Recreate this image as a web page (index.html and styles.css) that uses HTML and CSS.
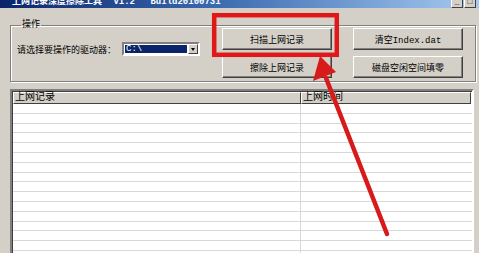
FILE: index.html
```html
<!DOCTYPE html>
<html lang="zh-CN">
<head>
    <meta charset="UTF-8">
    <title>上网记录深度擦除工具</title>
    <link rel="stylesheet" href="styles.css">
</head>
<body>
    <div class="window">
        <div class="titlebar">
            <div class="title">
                <span class="title-name">上网记录深度擦除工具</span>
                <span class="title-ver">V1.2</span>
                <span class="title-build">Build20100731</span>
            </div>
            <div class="title-buttons">
                <span class="tb-btn">_</span>
                <span class="tb-btn">□</span>
            </div>
        </div>

        <div class="content">
            <fieldset class="group">
                <legend>操作</legend>
                <div class="drive-row">
                    <label>请选择要操作的驱动器：</label>
                    <div class="combo">
                        <span class="combo-value">C:\</span>
                        <span class="combo-arrow"></span>
                    </div>
                </div>
                <div class="actions">
                    <button class="btn">扫描上网记录</button>
                    <button class="btn">清空Index.dat</button>
                    <button class="btn">擦除上网记录</button>
                    <button class="btn">磁盘空闲空间填零</button>
                </div>
            </fieldset>

            <div class="listview">
                <div class="lv-header">
                    <div class="lv-col col-url">上网记录</div>
                    <div class="lv-col col-time">上网时间</div>
                </div>
                <div class="lv-body" id="recordList"></div>
            </div>
        </div>

        <!-- 标注：红框和箭头 -->
        <svg class="annotation" width="479" height="253" viewBox="0 0 479 253">
            <rect x="214.2" y="15.2" width="122.6" height="39.6" fill="none" stroke="#e01818" stroke-width="4.5"/>
            <line x1="387" y1="234" x2="326" y2="78" stroke="#d81a1a" stroke-width="4.5" stroke-linecap="round"/>
            <polygon points="320,56 313,81 336,72" fill="#d81a1a"/>
        </svg>
    </div>

    <script>
        // 空的记录行
        const list = document.getElementById('recordList');
        for (let i = 0; i < 16; i++) {
            const row = document.createElement('div');
            row.className = 'lv-row';
            row.innerHTML = '<div class="lv-cell cell-url"></div><div class="lv-cell cell-time"></div>';
            list.appendChild(row);
        }
    </script>
</body>
</html>
```

FILE: styles.css
```css
body {
    margin: 0;
    font-family: "Liberation Mono", "Noto Sans CJK SC", monospace;
    font-size: 9px;
    color: #000;
}
.window {
    position: relative;
    width: 479px;
    height: 253px;
    background-color: #d4d0c8;
    overflow: hidden;
}
.titlebar {
    height: 8px;
    display: flex;
    justify-content: space-between;
    background: linear-gradient(to right, #0a246a 0%, #3a6ab0 45%, #a6caf0 100%);
    overflow: hidden;
}
.title {
    margin-top: -2px;
    padding-left: 12px;
    line-height: 9px;
    color: #fff;
    font-weight: bold;
    white-space: nowrap;
}
.title-ver {
    margin-left: 6px;
}
.title-build {
    margin-left: 10px;
}
.title-buttons {
    display: flex;
    gap: 1px;
    margin-top: -4px;
    margin-right: 3px;
}
.tb-btn {
    width: 10px;
    height: 10px;
    background-color: #d4d0c8;
    border: 1px solid;
    border-color: #fff #404040 #404040 #fff;
    font-size: 8px;
    line-height: 10px;
    text-align: center;
}
.content {
    padding: 0 3px 0 10px;
}
.group {
    margin: 14px 0 0 0;
    padding: 0 12px 3px 6px;
    min-width: 0;
    border: 1px solid #808080;
    box-shadow: inset 1px 1px #fff, 1px 1px #fff;
    display: flex;
}
.group legend {
    padding: 0 1px;
    margin-left: 4px;
    line-height: 6px;
}
.drive-row {
    display: flex;
    align-items: center;
    gap: 6px;
    margin-top: 14px;
    align-self: flex-start;
}
.combo {
    width: 72px;
    height: 8px;
    display: flex;
    padding: 1px;
    background-color: #fff;
    border: 2px solid;
    border-color: #808080 #fff #fff #808080;
}
.combo-value {
    flex: 1;
    background-color: #0a246a;
    color: #fff;
    line-height: 8px;
    padding-left: 1px;
}
.combo-arrow {
    position: relative;
    width: 10px;
    margin: -1px -1px -1px 1px;
    background-color: #d4d0c8;
    border: 1px solid;
    border-color: #fff #404040 #404040 #fff;
    box-sizing: border-box;
}
.combo-arrow::after {
    content: "";
    position: absolute;
    left: 2px;
    top: 3px;
    border-left: 2.5px solid transparent;
    border-right: 2.5px solid transparent;
    border-top: 3px solid #000;
}
.actions {
    margin-left: auto;
    display: grid;
    grid-template-columns: 110px 110px;
    grid-auto-rows: 22px;
    column-gap: 21px;
    row-gap: 6px;
}
.btn {
    font-family: inherit;
    font-size: 9px;
    padding: 0;
    color: #000;
    background-color: #d4d0c8;
    border: 1px solid;
    border-color: #fff #404040 #404040 #fff;
    box-shadow: inset -1px -1px #808080;
}
.listview {
    margin: 7px 2px 0 0;
    height: 200px;
    border: 2px solid;
    border-color: #808080 #fff #fff #808080;
    box-shadow: inset 1px 1px #404040;
    background-color: #fff;
}
.lv-header {
    display: flex;
    height: 12px;
    margin: 1px 0 0 1px;
    font-size: 10px;
    line-height: 12px;
}
.lv-col {
    box-sizing: border-box;
    padding-left: 1px;
    background-color: #d4d0c8;
    border: 1px solid;
    border-color: #fff #404040 #404040 #fff;
    line-height: 10px;
    white-space: nowrap;
}
.col-url {
    width: 288px;
}
.col-time {
    flex: 1;
    margin-right: 1px;
}
.lv-body {
    margin-left: 1px;
}
.lv-row {
    display: flex;
    height: 9.8px;
    box-sizing: border-box;
    border-bottom: 1px solid #d8d8d8;
}
.cell-url {
    width: 287px;
    border-right: 1px solid #d8d8d8;
}
.cell-time {
    flex: 1;
}
.annotation {
    position: absolute;
    left: 0;
    top: 0;
    pointer-events: none;
}
```
